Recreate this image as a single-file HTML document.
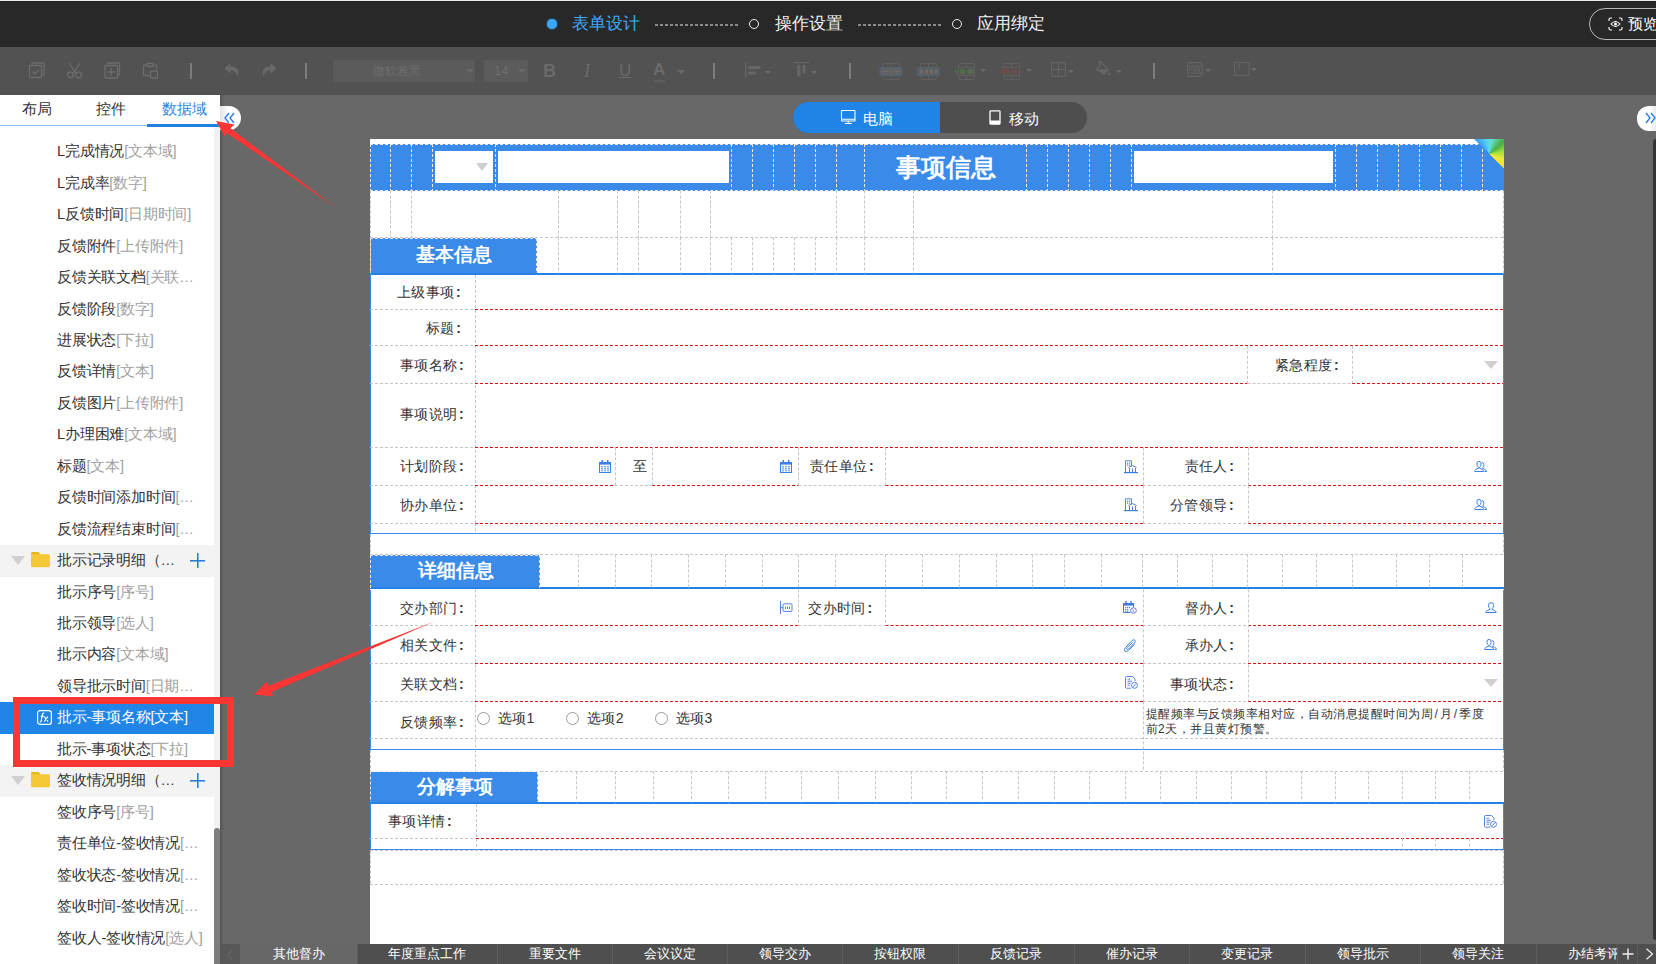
<!DOCTYPE html>
<html><head><meta charset="utf-8">
<style>
*{box-sizing:border-box;margin:0;padding:0}
body{width:1656px;height:964px;overflow:hidden;position:relative;background:#686868;font-family:"Liberation Sans",sans-serif;font-size:14px;color:#333}
.a{position:absolute}
#top{left:0;top:0;width:1656px;height:47px;background:#282828}
#topline{left:0;top:0;width:1656px;height:1px;background:#eeeff1;z-index:5}
#tool{left:0;top:47px;width:1656px;height:48px;background:#525252}
#side{left:0;top:95px;width:220px;height:869px;background:#fff;overflow:hidden}
#page{left:370px;top:139px;width:1134px;height:805px;background:#fff}
#btm{left:220px;top:944px;width:1436px;height:20px;background:#4f4f4f;overflow:hidden}
.bt{top:0;height:20px;font-size:13px;line-height:20px;color:#fff;white-space:nowrap;overflow:hidden}
.stept{font-size:17px;line-height:20px;top:14px;white-space:nowrap}
.dots{top:24px;height:2px;background-image:linear-gradient(to right,#8a8a8a 60%,transparent 60%);background-size:5px 2px}
.ring{width:10px;height:10px;border:1.4px solid #eee;border-radius:50%;top:19px}
.ic{stroke:#6c6c6c;fill:none;stroke-width:1.3}
.sep{width:2px;height:16px;top:16px;background:#7c7c7c}
.caret{width:0;height:0;border-left:4px solid transparent;border-right:4px solid transparent;border-top:4px solid #6a6a6a}
.tab{top:4.5px;font-size:14.6px;line-height:18px;color:#333;white-space:nowrap}
.row{left:0;width:214px;height:31.9px}
.row .t{top:6.15px;font-size:14.6px;letter-spacing:-0.2px;line-height:18px;color:#333;white-space:nowrap}
.row i{font-style:normal;color:#a0a0a0}
.fold{background:#f3f3f3}
.sel{background:#2185e8}
.tri{left:11px;top:10.8px;width:0;height:0;border-left:7px solid transparent;border-right:7px solid transparent;border-top:9px solid #d0d0d0}
.plus{left:190px;top:8px;width:15px;height:15px;background:linear-gradient(#2a7ee0,#2a7ee0) center/15px 1.6px no-repeat,linear-gradient(#2a7ee0,#2a7ee0) center/1.6px 15px no-repeat}
.lb{font-size:14px;letter-spacing:0.4px;line-height:18px;color:#333;white-space:nowrap}
.ttl{font-size:25px;font-weight:bold;line-height:30px;color:#fff;white-space:nowrap}
.sec{font-size:19px;font-weight:bold;line-height:24px;color:#fff;white-space:nowrap}
.hint{font-size:12px;letter-spacing:0.5px;line-height:15.8px;color:#333;white-space:nowrap}
.co{font-weight:bold;margin-left:1.5px}
.sl{font-style:normal;margin:0 1.5px}
</style></head><body>
<div id="topline" class="a"></div>
<div class="a" style="left:0;top:1px;width:1656px;height:1px;background:#1e1e1e;z-index:5"></div>
<div id="top" class="a">
  <div class="a" style="left:547px;top:19px;width:10px;height:10px;border-radius:50%;background:#3aa7f7;box-shadow:0 0 2px #3aa7f7"></div>
  <div class="a stept" style="left:572px;color:#40a8f8">表单设计</div>
  <div class="a dots" style="left:655px;width:84px"></div>
  <div class="a ring" style="left:749px"></div>
  <div class="a stept" style="left:775px;color:#f2f2f2">操作设置</div>
  <div class="a dots" style="left:858px;width:84px"></div>
  <div class="a ring" style="left:952px"></div>
  <div class="a stept" style="left:977px;color:#f2f2f2">应用绑定</div>
  <div class="a" style="left:1589px;top:8px;width:120px;height:32px;border:1.3px solid #b8b8b8;border-radius:16px"></div>
  <svg class="a" style="left:1607.5px;top:16.5px" width="15" height="14" viewBox="0 0 15 14"><g stroke="#fff" fill="none" stroke-width="1.1"><path d="M1 4V2.5Q1 1 2.5 1H4M11 1h1.5Q14 1 14 2.5V4M14 10v1.5Q14 13 12.5 13H11M4 13H2.5Q1 13 1 11.5V10"/><path d="M3 7Q7.5 2 12 7Q7.5 12 3 7z"/></g><circle cx="7.5" cy="7" r="1.5" fill="#fff"/></svg>
  <div class="a" style="left:1627.5px;top:13.5px;font-size:15px;line-height:20px;color:#fff;white-space:nowrap">预览</div>
</div>
<div id="tool" class="a">
  <svg class="a" style="left:28px;top:15px" width="18" height="17" viewBox="0 0 18 17"><g class="ic"><path d="M4 2.5V1.5Q4 1 4.5 1H15.5Q16 1 16 1.5V12.5Q16 13 15.5 13H14"/><rect x="1.5" y="3.5" width="12" height="12" rx="0.8"/><path d="M4.5 9.5l2.5 2.5 4-4.5"/></g></svg>
  <svg class="a" style="left:66px;top:15px" width="17" height="17" viewBox="0 0 17 17"><g class="ic"><path d="M3 1l6.5 10M14 1L7.5 11"/><circle cx="4.5" cy="13" r="2.8"/><circle cx="12.5" cy="13" r="2.8"/></g></svg>
  <svg class="a" style="left:104px;top:15px" width="17" height="17" viewBox="0 0 17 17"><g class="ic"><path d="M3.5 2.5V1.5Q3.5 1 4 1H15Q15.5 1 15.5 1.5V12.5Q15.5 13 15 13H14"/><rect x="1" y="3.5" width="12.5" height="12.5" rx="0.8"/><path d="M7.2 6v8M3.3 10h7.8"/></g></svg>
  <svg class="a" style="left:142px;top:15px" width="17" height="17" viewBox="0 0 17 17"><g class="ic"><path d="M4 3H2.5Q1.5 3 1.5 4V12.5Q1.5 13.5 2.5 13.5H8M12.5 3H14Q14.5 3 14.5 4V7"/><rect x="5" y="1.5" width="6" height="3" rx="0.5"/><rect x="8.5" y="9" width="7" height="7" rx="1"/><path d="M13.5 14h0.5"/></g></svg>
  <div class="a sep" style="left:190px"></div>
  <svg class="a" style="left:224px;top:15px" width="16" height="16" viewBox="0 0 16 16"><path fill="#696969" d="M6.5 1L0.5 6.5 6.5 11.5V8.5Q12 8 13.5 14.5 15 10 14 8.5 12 4.8 6.5 4.6z"/></svg>
  <svg class="a" style="left:261px;top:15px" width="16" height="16" viewBox="0 0 16 16"><path fill="#696969" d="M9.5 1L15.5 6.5 9.5 11.5V8.5Q4 8 2.5 14.5 1 10 2 8.5 4 4.8 9.5 4.6z"/></svg>
  <div class="a sep" style="left:305px"></div>
  <div class="a" style="left:333px;top:13px;width:142px;height:22px;background:#5b5b5b;border-radius:2px"></div>
  <div class="a" style="left:373px;top:15px;font-size:12px;line-height:18px;color:#6e6e6e">微软雅黑</div>
  <div class="a caret" style="left:466px;top:22px"></div>
  <div class="a" style="left:484px;top:13px;width:44px;height:22px;background:#5b5b5b;border-radius:2px"></div>
  <div class="a" style="left:494px;top:15px;font-size:13px;line-height:18px;color:#6e6e6e">14</div>
  <div class="a caret" style="left:518px;top:22px"></div>
  <div class="a" style="left:543px;top:13px;font-size:18px;font-weight:bold;line-height:22px;color:#6a6a6a">B</div>
  <div class="a" style="left:584px;top:13px;font-size:18px;font-style:italic;font-family:'Liberation Serif',serif;line-height:22px;color:#6a6a6a">I</div>
  <div class="a" style="left:619px;top:13px;font-size:17px;line-height:22px;color:#6a6a6a;text-decoration:underline">U</div>
  <div class="a" style="left:653px;top:13px;font-size:17px;font-weight:bold;line-height:20px;color:#6a6a6a;border-bottom:2px solid #5d5d5d">A</div>
  <div class="a caret" style="left:677px;top:23px"></div>
  <div class="a sep" style="left:713px"></div>
  <svg class="a" style="left:745px;top:15px" width="18" height="16" viewBox="0 0 18 16"><g fill="#666"><rect x="0" y="0" width="1.3" height="16"/><rect x="3" y="4" width="12.5" height="3.2" rx="1.6"/><rect x="3" y="9.5" width="8.5" height="3.2" rx="1.6"/></g></svg>
  <div class="a caret" style="left:765px;top:24px;border-width:3.5px 3.5px 0"></div>
  <svg class="a" style="left:793px;top:15px" width="16" height="16" viewBox="0 0 16 16"><g fill="#666"><rect x="0" y="0" width="16" height="1.2"/><rect x="4" y="2.8" width="3.5" height="12" rx="1.7"/><rect x="9.5" y="2.8" width="3.2" height="8.5" rx="1.6"/></g></svg>
  <div class="a caret" style="left:811px;top:24px;border-width:3.5px 3.5px 0"></div>
  <div class="a sep" style="left:849px"></div>
  <svg class="a" style="left:879px;top:16px" width="24" height="17" viewBox="0 0 24 17"><g fill="none" stroke="#606060" stroke-width="1"><rect x="4" y="0.5" width="16" height="16" rx="1.5"/><path d="M12 0.5v4M12 12.5v4"/></g><rect x="1" y="4.5" width="22" height="8" rx="1" fill="#626262" stroke="#50627a" stroke-width="1.2"/><path d="M4 8.5h5M20 8.5h-5" stroke="#6e6e6e" stroke-width="1.2"/></svg>
  <svg class="a" style="left:917px;top:16px" width="23" height="17" viewBox="0 0 23 17"><g fill="none" stroke="#606060" stroke-width="1"><rect x="3.5" y="0.5" width="16" height="16" rx="1.5"/><path d="M11.5 0.5v4M11.5 12.5v4"/></g><rect x="0.8" y="4.5" width="21.5" height="8" rx="1" fill="#5e5e5e" stroke="#50627a" stroke-width="1.2"/><g fill="#6c6c6c"><rect x="3" y="6.5" width="3" height="4"/><rect x="8" y="6.5" width="3" height="4"/><rect x="13" y="6.5" width="3" height="4"/><rect x="18" y="6.5" width="3" height="4"/></g></svg>
  <svg class="a" style="left:954px;top:16px" width="26" height="17" viewBox="0 0 26 17"><g fill="none" stroke="#606060" stroke-width="1"><rect x="4.5" y="0.5" width="16" height="16" rx="1.5"/><path d="M4.5 4.5h16M4.5 12.5h16M12.5 0.5v4M12.5 12.5v4"/></g><g fill="#566a4e"><path d="M0.5 8.5l3-2.5v5z"/><rect x="5.5" y="5.8" width="6" height="5.4" rx="2.5"/><rect x="13" y="5.8" width="7" height="5.4" rx="2.5"/></g></svg>
  <div class="a caret" style="left:980px;top:22px;border-width:3.5px 3.5px 0"></div>
  <svg class="a" style="left:1000px;top:16px" width="26" height="17" viewBox="0 0 26 17"><g fill="none" stroke="#606060" stroke-width="1"><rect x="3.5" y="0.5" width="16" height="16" rx="1.5"/><path d="M3.5 4.5h16M3.5 12.5h16M11.5 0.5v4M11.5 12.5v4"/></g><g fill="#6a4e4e"><rect x="0.5" y="5.8" width="9" height="5.4" rx="2.5"/><rect x="10.5" y="5.8" width="7" height="5.4" rx="2.5"/></g><path d="M20.5 6.5l3 4M23.5 6.5l-3 4" stroke="#6a4e4e" stroke-width="1.1"/></svg>
  <div class="a caret" style="left:1026px;top:22px;border-width:3.5px 3.5px 0"></div>
  <svg class="a" style="left:1051px;top:15px" width="15" height="15" viewBox="0 0 15 15"><g fill="none" stroke="#656565" stroke-width="1.1"><rect x="0.6" y="0.6" width="13.8" height="13.8" rx="1.2"/><path d="M7.5 0.6v13.8M0.6 7.5h13.8"/></g></svg>
  <div class="a caret" style="left:1068px;top:23px;border-width:3.5px 3.5px 0"></div>
  <svg class="a" style="left:1095px;top:14px" width="16" height="16" viewBox="0 0 16 16"><g fill="#666"><path d="M4 1l1-0.8 8.5 8.3L9 13.5 1.5 8 5.2 4.5z" fill="none" stroke="#666" stroke-width="1.2"/><path d="M2 8.3h11L9 13z"/><circle cx="14" cy="13" r="1.3"/></g></svg>
  <div class="a caret" style="left:1116px;top:23px;border-width:3.5px 3.5px 0"></div>
  <div class="a sep" style="left:1153px"></div>
  <svg class="a" style="left:1187px;top:15px" width="16" height="15" viewBox="0 0 16 15"><g fill="none" stroke="#656565" stroke-width="1.1"><rect x="0.6" y="0.6" width="14.5" height="13.8" rx="1.8"/><path d="M0.6 4h14.5M0.6 11h14.5M3 6v3M3 6h3M7 6h5v3H7z"/></g></svg>
  <div class="a caret" style="left:1205px;top:22px;border-width:3.5px 3.5px 0"></div>
  <svg class="a" style="left:1234px;top:15px" width="16" height="14" viewBox="0 0 16 14"><g fill="none" stroke="#656565" stroke-width="1.1"><rect x="0.6" y="0.6" width="14.5" height="12.8"/><path d="M3.5 3h3M5 3v5"/></g></svg>
  <div class="a caret" style="left:1251px;top:21px;border-width:3.5px 3.5px 0"></div>
</div>
<div id="side" class="a">
  <div class="a tab" style="left:22px">布局</div>
  <div class="a tab" style="left:96px">控件</div>
  <div class="a tab" style="left:162px;color:#2e86e6">数据域</div>
  <div class="a" style="left:0;top:30px;width:220px;height:1px;background:#8fc0f0"></div>
  <div class="a" style="left:147px;top:29px;width:73px;height:3px;background:#1f80e0"></div>
  <div class="a" style="left:214px;top:32px;width:6px;height:837px;background:#f2f2f2"></div>
  <div class="a" style="left:214px;top:733px;width:6px;height:136px;background:#7c7c7c;border-radius:3px 3px 0 0"></div>
<div class="a row" style="top:41.15px"><span class="a t" style="left:57px">L完成情况<i>[文本域]</i></span></div>
<div class="a row" style="top:72.60px"><span class="a t" style="left:57px">L完成率<i>[数字]</i></span></div>
<div class="a row" style="top:104.05px"><span class="a t" style="left:57px">L反馈时间<i>[日期时间]</i></span></div>
<div class="a row" style="top:135.50px"><span class="a t" style="left:57px">反馈附件<i>[上传附件]</i></span></div>
<div class="a row" style="top:166.95px"><span class="a t" style="left:57px">反馈关联文档<i>[关联…</i></span></div>
<div class="a row" style="top:198.40px"><span class="a t" style="left:57px">反馈阶段<i>[数字]</i></span></div>
<div class="a row" style="top:229.85px"><span class="a t" style="left:57px">进展状态<i>[下拉]</i></span></div>
<div class="a row" style="top:261.30px"><span class="a t" style="left:57px">反馈详情<i>[文本]</i></span></div>
<div class="a row" style="top:292.75px"><span class="a t" style="left:57px">反馈图片<i>[上传附件]</i></span></div>
<div class="a row" style="top:324.20px"><span class="a t" style="left:57px">L办理困难<i>[文本域]</i></span></div>
<div class="a row" style="top:355.65px"><span class="a t" style="left:57px">标题<i>[文本]</i></span></div>
<div class="a row" style="top:387.10px"><span class="a t" style="left:57px">反馈时间添加时间<i>[…</i></span></div>
<div class="a row" style="top:418.55px"><span class="a t" style="left:57px">反馈流程结束时间<i>[…</i></span></div>
<div class="a row fold" style="top:450.00px"><div class="a tri"></div><svg class="a" style="left:31px;top:7px" width="19" height="16" viewBox="0 0 19 16"><path d="M0 1.5Q0 0 1.5 0H7.5L9.5 2.2H17.5Q19 2.2 19 3.7V13.7Q19 15.2 17.5 15.2H1.5Q0 15.2 0 13.7z" fill="#f5c935"/><path d="M0 1.5Q0 0 1.5 0H7.5L9.3 2.2H0z" fill="#e7b81c"/></svg><span class="a t" style="left:57px">批示记录明细（…</span><div class="a plus"></div></div>
<div class="a row" style="top:481.45px"><span class="a t" style="left:57px">批示序号<i>[序号]</i></span></div>
<div class="a row" style="top:512.90px"><span class="a t" style="left:57px">批示领导<i>[选人]</i></span></div>
<div class="a row" style="top:544.35px"><span class="a t" style="left:57px">批示内容<i>[文本域]</i></span></div>
<div class="a row" style="top:575.80px"><span class="a t" style="left:57px">领导批示时间<i>[日期…</i></span></div>
<div class="a row sel" style="top:607.25px"><svg class="a" style="left:37px;top:8px" width="15" height="15" viewBox="0 0 15 15"><g fill="none" stroke="#fff" stroke-width="1.2"><rect x="0.6" y="0.6" width="13.8" height="13.8" rx="2.5"/><path d="M7.2 3.3Q5.8 2.8 5.4 4.3L4.2 10.8Q3.9 12 2.8 11.8M3.8 6.3h3M7.3 6.5l3.6 5M10.9 6.5l-3.6 5"/></g></svg><span class="a t" style="left:57px;color:#fff">批示-事项名称[文本]</span></div>
<div class="a row" style="top:638.70px"><span class="a t" style="left:57px">批示-事项状态<i>[下拉]</i></span></div>
<div class="a row fold" style="top:670.15px"><div class="a tri"></div><svg class="a" style="left:31px;top:7px" width="19" height="16" viewBox="0 0 19 16"><path d="M0 1.5Q0 0 1.5 0H7.5L9.5 2.2H17.5Q19 2.2 19 3.7V13.7Q19 15.2 17.5 15.2H1.5Q0 15.2 0 13.7z" fill="#f5c935"/><path d="M0 1.5Q0 0 1.5 0H7.5L9.3 2.2H0z" fill="#e7b81c"/></svg><span class="a t" style="left:57px">签收情况明细（…</span><div class="a plus"></div></div>
<div class="a row" style="top:701.60px"><span class="a t" style="left:57px">签收序号<i>[序号]</i></span></div>
<div class="a row" style="top:733.05px"><span class="a t" style="left:57px">责任单位-签收情况<i>[…</i></span></div>
<div class="a row" style="top:764.50px"><span class="a t" style="left:57px">签收状态-签收情况<i>[…</i></span></div>
<div class="a row" style="top:795.95px"><span class="a t" style="left:57px">签收时间-签收情况<i>[…</i></span></div>
<div class="a row" style="top:827.40px"><span class="a t" style="left:57px">签收人-签收情况<i>[选人]</i></span></div>
</div>
<div class="a" style="left:220px;top:95px;width:4px;height:869px;background:linear-gradient(to right,rgba(0,0,0,0.2),rgba(0,0,0,0))"></div>
<!--CANVAS-->
<div class="a" style="left:220px;top:106px;width:21px;height:24px;background:linear-gradient(to right,#e4e4e4,#fff 40%);border-radius:0 12px 12px 0"></div>
<svg class="a" style="left:224px;top:112px" width="12" height="12" viewBox="0 0 12 12"><path d="M5 1L1 6l4 5M10 1L6 6l4 5" fill="none" stroke="#2a7ee8" stroke-width="1.4"/></svg>
<div class="a" style="left:1637px;top:106px;width:21px;height:25px;background:linear-gradient(to left,#e4e4e4,#fff 40%);border-radius:12px 0 0 12px"></div>
<svg class="a" style="left:1645px;top:112px" width="12" height="12" viewBox="0 0 12 12"><path d="M1 1l4 5-4 5M6 1l4 5-4 5" fill="none" stroke="#2a7ee8" stroke-width="1.4"/></svg>
<div class="a" style="left:793px;top:102px;width:294px;height:31px;border-radius:15.5px;background:#4e4e4e;overflow:hidden"><div class="a" style="left:0;top:0;width:147px;height:31px;background:#2083e6"></div></div>
<svg class="a" style="left:840px;top:109px" width="16" height="16" viewBox="0 0 16 16"><g fill="none" stroke="#fff" stroke-width="1.1"><rect x="1.5" y="1.5" width="13.5" height="10.5" rx="0.6"/><path d="M1.5 10.3h13.5M8.2 12v2.5M4.8 14.5h7"/></g></svg>
<div class="a" style="left:863px;top:109.5px;font-size:15px;line-height:18px;color:#fff">电脑</div>
<svg class="a" style="left:989px;top:110px" width="12" height="15" viewBox="0 0 12 15"><g fill="none" stroke="#fff" stroke-width="1.3"><rect x="1" y="0.8" width="10" height="13.4" rx="0.8"/></g><rect x="1" y="10.5" width="10" height="3.5" fill="#fff"/></svg>
<div class="a" style="left:1009px;top:109.5px;font-size:15px;line-height:18px;color:#fff">移动</div>

<div class="a" style="left:1653px;top:139px;width:6px;height:801px;background:#343434;border-radius:3px"></div>

<!--/CANVAS-->
<!--FORM-->
<div id="page" class="a">
<div class="a" style="left:0.0px;top:5.0px;width:1134.0px;height:46.5px;background:#3a8be9;"></div>
<div class="a" style="left:65.0px;top:12.0px;width:58.0px;height:32.0px;background:#fff;"></div>
<div class="a" style="left:106px;top:24px;width:0;height:0;border-left:6.5px solid transparent;border-right:6.5px solid transparent;border-top:8px solid #cfcfcf"></div>
<div class="a" style="left:127.8px;top:12.0px;width:231.2px;height:32.0px;background:#fff;"></div>
<div class="a" style="left:763.7px;top:12.0px;width:199.6px;height:32.0px;background:#fff;"></div>
<div class="a ttl" style="left:526.0px;top:13.0px;">事项信息</div>
<div class="a" style="left:0.0px;top:99.0px;width:167.0px;height:36.0px;background:#3a8be9;"></div>
<div class="a sec" style="left:46.0px;top:103.5px;">基本信息</div>
<div class="a" style="left:0.0px;top:134.0px;width:1134.0px;height:2.0px;background:#2580e8;"></div>
<div class="a" style="left:0.0px;top:136.0px;width:1.0px;height:258.5px;background:#3a8be9;"></div>
<div class="a" style="left:1133.0px;top:136.0px;width:1.0px;height:258.5px;background:#3a8be9;"></div>
<div class="a" style="left:0.0px;top:394.0px;width:1134.0px;height:1.0px;background:#3a8be9;"></div>
<div class="a lb" style="left:26.9px;top:144.3px;">上级事项<b class=co>:</b></div>
<div class="a lb" style="left:56.0px;top:179.8px;">标题<b class=co>:</b></div>
<div class="a lb" style="left:30.0px;top:216.8px;">事项名称<b class=co>:</b></div>
<div class="a lb" style="left:30.0px;top:266.3px;">事项说明<b class=co>:</b></div>
<div class="a lb" style="left:30.0px;top:318.3px;">计划阶段<b class=co>:</b></div>
<div class="a lb" style="left:30.0px;top:356.8px;">协办单位<b class=co>:</b></div>
<div class="a lb" style="left:905.0px;top:216.8px;">紧急程度<b class=co>:</b></div>
<div class="a lb" style="left:262.9px;top:318.3px;">至</div>
<div class="a lb" style="left:440.0px;top:318.3px;">责任单位<b class=co>:</b></div>
<div class="a lb" style="left:814.5px;top:318.3px;">责任人<b class=co>:</b></div>
<div class="a lb" style="left:800.0px;top:356.8px;">分管领导<b class=co>:</b></div>
<div class="a" style="left:0.0px;top:416.0px;width:170.0px;height:33.5px;background:#3a8be9;"></div>
<div class="a sec" style="left:47.5px;top:420.0px;">详细信息</div>
<div class="a" style="left:0.0px;top:448.0px;width:1134.0px;height:2.0px;background:#2580e8;"></div>
<div class="a" style="left:0.0px;top:450.5px;width:1.0px;height:159.8px;background:#3a8be9;"></div>
<div class="a" style="left:1133.0px;top:450.5px;width:1.0px;height:159.8px;background:#3a8be9;"></div>
<div class="a" style="left:0.0px;top:610.0px;width:1134.0px;height:1.0px;background:#3a8be9;"></div>
<div class="a lb" style="left:30.0px;top:459.8px;">交办部门<b class=co>:</b></div>
<div class="a lb" style="left:30.0px;top:496.8px;">相关文件<b class=co>:</b></div>
<div class="a lb" style="left:30.0px;top:536.3px;">关联文档<b class=co>:</b></div>
<div class="a lb" style="left:30.0px;top:574.3px;">反馈频率<b class=co>:</b></div>
<div class="a lb" style="left:438.3px;top:459.8px;">交办时间<b class=co>:</b></div>
<div class="a lb" style="left:814.5px;top:459.8px;">督办人<b class=co>:</b></div>
<div class="a lb" style="left:814.5px;top:496.8px;">承办人<b class=co>:</b></div>
<div class="a lb" style="left:800.0px;top:536.3px;">事项状态<b class=co>:</b></div>
<div class="a" style="left:107px;top:573.2px;width:13px;height:13px;border:1px solid #9a9a9a;border-radius:50%"></div>
<div class="a lb" style="left:127.8px;top:570.3px;font-size:14px">选项1</div>
<div class="a" style="left:196px;top:573.2px;width:13px;height:13px;border:1px solid #9a9a9a;border-radius:50%"></div>
<div class="a lb" style="left:217.0px;top:570.3px;font-size:14px">选项2</div>
<div class="a" style="left:285px;top:573.2px;width:13px;height:13px;border:1px solid #9a9a9a;border-radius:50%"></div>
<div class="a lb" style="left:305.6px;top:570.3px;font-size:14px">选项3</div>
<div class="a hint" style="left:775.5px;top:567.5px;">提醒频率与反馈频率相对应，自动消息提醒时间为周<i class=sl>/</i>月<i class=sl>/</i>季度<br>前2天，并且黄灯预警。</div>
<div class="a" style="left:0.0px;top:632.5px;width:167.5px;height:31.5px;background:#3a8be9;"></div>
<div class="a sec" style="left:46.5px;top:636.0px;">分解事项</div>
<div class="a" style="left:0.0px;top:663.0px;width:1134.0px;height:2.0px;background:#2580e8;"></div>
<div class="a" style="left:0.0px;top:665.0px;width:1.0px;height:46.0px;background:#3a8be9;"></div>
<div class="a" style="left:1133.0px;top:665.0px;width:1.0px;height:46.0px;background:#3a8be9;"></div>
<div class="a" style="left:0.0px;top:710.0px;width:1134.0px;height:1.0px;background:#3a8be9;"></div>
<div class="a lb" style="left:18.0px;top:672.8px;">事项详情<b class=co>:</b></div>
<svg class="a" style="left:228.5px;top:321.0px" width="12" height="13" viewBox="0 0 12 13"><g fill="none" stroke="#3a7fe8" stroke-width="1"><rect x="0.5" y="2.5" width="11" height="10" /></g><rect x="0" y="2" width="12" height="2.6" fill="#3a7fe8"/><rect x="2.5" y="0" width="1.5" height="3" fill="#3a7fe8"/><rect x="8" y="0" width="1.5" height="3" fill="#3a7fe8"/><g fill="#3a7fe8"><rect x="2.3" y="6" width="1.4" height="1.4"/><rect x="5.3" y="6" width="1.4" height="1.4"/><rect x="8.3" y="6" width="1.4" height="1.4"/><rect x="2.3" y="8.2" width="1.4" height="1.4"/><rect x="5.3" y="8.2" width="1.4" height="1.4"/><rect x="8.3" y="8.2" width="1.4" height="1.4"/><rect x="2.3" y="10.2" width="1.4" height="1.2"/><rect x="5.3" y="10.2" width="1.4" height="1.2"/><rect x="8.3" y="10.2" width="1.4" height="1.2"/></g></svg>
<svg class="a" style="left:410.0px;top:321.0px" width="12" height="13" viewBox="0 0 12 13"><g fill="none" stroke="#3a7fe8" stroke-width="1"><rect x="0.5" y="2.5" width="11" height="10" /></g><rect x="0" y="2" width="12" height="2.6" fill="#3a7fe8"/><rect x="2.5" y="0" width="1.5" height="3" fill="#3a7fe8"/><rect x="8" y="0" width="1.5" height="3" fill="#3a7fe8"/><g fill="#3a7fe8"><rect x="2.3" y="6" width="1.4" height="1.4"/><rect x="5.3" y="6" width="1.4" height="1.4"/><rect x="8.3" y="6" width="1.4" height="1.4"/><rect x="2.3" y="8.2" width="1.4" height="1.4"/><rect x="5.3" y="8.2" width="1.4" height="1.4"/><rect x="8.3" y="8.2" width="1.4" height="1.4"/><rect x="2.3" y="10.2" width="1.4" height="1.2"/><rect x="5.3" y="10.2" width="1.4" height="1.2"/><rect x="8.3" y="10.2" width="1.4" height="1.2"/></g></svg>
<svg class="a" style="left:754.0px;top:321.0px" width="14" height="14" viewBox="0 0 14 14"><g fill="none" stroke="#5a7ee6" stroke-width="1"><path d="M1.5 12.5V0.8H7.5V6.5"/><path d="M4.5 7.5L8.5 5.5 12.5 7.5M5.5 8v4.5M11.5 8v4.5M8.5 8.5v4"/></g><rect x="0" y="12" width="14" height="1.2" fill="#3a7fe8"/><g fill="#6a6ae0"><rect x="3" y="2.5" width="1.2" height="1.2"/><rect x="5" y="2.5" width="1.2" height="1.2"/><rect x="3" y="4.5" width="1.2" height="1.2"/><rect x="5" y="4.5" width="1.2" height="1.2"/></g></svg>
<svg class="a" style="left:754.0px;top:359.0px" width="14" height="14" viewBox="0 0 14 14"><g fill="none" stroke="#5a7ee6" stroke-width="1"><path d="M1.5 12.5V0.8H7.5V6.5"/><path d="M4.5 7.5L8.5 5.5 12.5 7.5M5.5 8v4.5M11.5 8v4.5M8.5 8.5v4"/></g><rect x="0" y="12" width="14" height="1.2" fill="#3a7fe8"/><g fill="#6a6ae0"><rect x="3" y="2.5" width="1.2" height="1.2"/><rect x="5" y="2.5" width="1.2" height="1.2"/><rect x="3" y="4.5" width="1.2" height="1.2"/><rect x="5" y="4.5" width="1.2" height="1.2"/></g></svg>
<svg class="a" style="left:1103.5px;top:322.0px" width="13" height="11" viewBox="0 0 13 11"><g fill="none" stroke="#3a7fe8" stroke-width="1"><path d="M0.8 10.5V9.5Q1.5 8 4.5 7.2V6.2Q3 5.5 3 3.5V2Q3 0.5 5 0.5Q7 0.5 7 2V3.5Q7 5.5 5.5 6.2V7.2Q8.5 8 9.5 9.5V10.5z"/><path d="M8 1.5Q9.8 1.8 9.8 3.5V4.8Q9.8 6 8.8 6.8V7.5Q11 8.2 12.5 9.8V10.5H10.5"/></g></svg>
<svg class="a" style="left:1103.5px;top:360.0px" width="13" height="11" viewBox="0 0 13 11"><g fill="none" stroke="#3a7fe8" stroke-width="1"><path d="M0.8 10.5V9.5Q1.5 8 4.5 7.2V6.2Q3 5.5 3 3.5V2Q3 0.5 5 0.5Q7 0.5 7 2V3.5Q7 5.5 5.5 6.2V7.2Q8.5 8 9.5 9.5V10.5z"/><path d="M8 1.5Q9.8 1.8 9.8 3.5V4.8Q9.8 6 8.8 6.8V7.5Q11 8.2 12.5 9.8V10.5H10.5"/></g></svg>
<svg class="a" style="left:409.5px;top:462.0px" width="13" height="13" viewBox="0 0 13 13"><g fill="none" stroke="#5a7ee6" stroke-width="1"><path d="M0.5 0v13M0.8 6.6h2"/><rect x="3" y="2.8" width="9" height="7.6" rx="1"/><path d="M5.5 5.5v2.5M7.5 5.5v2.5M9.5 5.5v2.5"/></g></svg>
<svg class="a" style="left:753.0px;top:462.0px" width="14" height="13" viewBox="0 0 14 13"><g fill="none" stroke="#3a7fe8" stroke-width="1"><path d="M7.5 11.5H0.5V2.5H10.5V6"/></g><rect x="0" y="2" width="11" height="2.6" fill="#3a7fe8"/><rect x="2.3" y="0" width="1.4" height="3" fill="#3a7fe8"/><rect x="7.3" y="0" width="1.4" height="3" fill="#3a7fe8"/><g fill="#4a9af0"><rect x="2" y="5.8" width="1.3" height="1.3"/><rect x="4" y="5.8" width="1.3" height="1.3"/><rect x="6" y="5.8" width="1.3" height="1.3"/><rect x="2" y="7.8" width="1.3" height="1.3"/><rect x="4" y="7.8" width="1.3" height="1.3"/><rect x="2" y="9.6" width="1.3" height="1.3"/><rect x="4" y="9.6" width="1.3" height="1.3"/></g><circle cx="10.5" cy="9.5" r="2.8" fill="#fff" stroke="#6a70e0" stroke-width="1"/><path d="M10 8v1.8l1.3 1.2" fill="none" stroke="#6a70e0" stroke-width="0.8"/></svg>
<svg class="a" style="left:1114.5px;top:463.0px" width="12" height="11" viewBox="0 0 12 11"><g fill="none" stroke="#3a7fe8" stroke-width="1"><path d="M0.8 10.5V10Q1.5 8.3 5 7.5V6.6Q3.5 5.8 3.5 3.8V2.3Q3.5 0.8 6 0.8Q8.5 0.8 8.5 2.3V3.8Q8.5 5.8 7 6.6V7.5Q10.5 8.3 11.2 10V10.5z"/></g></svg>
<svg class="a" style="left:754.0px;top:500.0px" width="12" height="13" viewBox="0 0 12 13"><path d="M10.5 5.5L4.5 11.5Q2 13.5 0.8 12Q-0.5 10.5 1.5 8.5L7.8 1.8Q9.5 0 10.8 1.2Q12 2.5 10.5 4L4.5 10Q3.5 11 2.8 10.3Q2.2 9.6 3.2 8.6L8.5 3.5" fill="none" stroke="#3a7fe8" stroke-width="1"/></svg>
<svg class="a" style="left:1114.0px;top:500.0px" width="13" height="11" viewBox="0 0 13 11"><g fill="none" stroke="#3a7fe8" stroke-width="1"><path d="M0.8 10.5V9.5Q1.5 8 4.5 7.2V6.2Q3 5.5 3 3.5V2Q3 0.5 5 0.5Q7 0.5 7 2V3.5Q7 5.5 5.5 6.2V7.2Q8.5 8 9.5 9.5V10.5z"/><path d="M8 1.5Q9.8 1.8 9.8 3.5V4.8Q9.8 6 8.8 6.8V7.5Q11 8.2 12.5 9.8V10.5H10.5"/></g></svg>
<svg class="a" style="left:755.0px;top:537.0px" width="13" height="13" viewBox="0 0 13 13"><g fill="none" stroke="#5a80e8" stroke-width="1"><path d="M6 12.2H1.5Q0.5 12.2 0.5 11.2V1.5Q0.5 0.5 1.5 0.5H7.5L10 3V5"/><path d="M2.5 3.2h2.5M2.5 5.2h4.5M2.5 7.2h3M2.5 9.2h2.5"/><circle cx="9.5" cy="9.3" r="3"/><path d="M8 11l3-3.5"/></g></svg>
<svg class="a" style="left:1114.0px;top:676.0px" width="13" height="13" viewBox="0 0 13 13"><g fill="none" stroke="#5a80e8" stroke-width="1"><path d="M6 12.2H1.5Q0.5 12.2 0.5 11.2V1.5Q0.5 0.5 1.5 0.5H7.5L10 3V5"/><path d="M2.5 3.2h2.5M2.5 5.2h4.5M2.5 7.2h3M2.5 9.2h2.5"/><circle cx="9.5" cy="9.3" r="3"/><path d="M8 11l3-3.5"/></g></svg>
<div class="a" style="left:1114px;top:222px;width:0;height:0;border-left:7px solid transparent;border-right:7px solid transparent;border-top:8px solid #cfcfcf"></div>
<div class="a" style="left:1114px;top:539.5px;width:0;height:0;border-left:7px solid transparent;border-right:7px solid transparent;border-top:8px solid #cfcfcf"></div>
<svg class="a" style="left:0;top:0" width="1134" height="805" viewBox="0 0 1134 805">
<line x1="20.5" y1="5.0" x2="20.5" y2="51.5" stroke="#f0e6d8" stroke-width="1" stroke-dasharray="3 2"/>
<line x1="41.5" y1="5.0" x2="41.5" y2="51.5" stroke="#f0e6d8" stroke-width="1" stroke-dasharray="3 2"/>
<line x1="62.5" y1="5.0" x2="62.5" y2="51.5" stroke="#f0e6d8" stroke-width="1" stroke-dasharray="3 2"/>
<line x1="125.5" y1="5.0" x2="125.5" y2="51.5" stroke="#f0e6d8" stroke-width="1" stroke-dasharray="3 2"/>
<line x1="361.5" y1="5.0" x2="361.5" y2="51.5" stroke="#f0e6d8" stroke-width="1" stroke-dasharray="3 2"/>
<line x1="382.5" y1="5.0" x2="382.5" y2="51.5" stroke="#f0e6d8" stroke-width="1" stroke-dasharray="3 2"/>
<line x1="403.5" y1="5.0" x2="403.5" y2="51.5" stroke="#f0e6d8" stroke-width="1" stroke-dasharray="3 2"/>
<line x1="424.5" y1="5.0" x2="424.5" y2="51.5" stroke="#f0e6d8" stroke-width="1" stroke-dasharray="3 2"/>
<line x1="445.5" y1="5.0" x2="445.5" y2="51.5" stroke="#f0e6d8" stroke-width="1" stroke-dasharray="3 2"/>
<line x1="466.5" y1="5.0" x2="466.5" y2="51.5" stroke="#f0e6d8" stroke-width="1" stroke-dasharray="3 2"/>
<line x1="494.5" y1="5.0" x2="494.5" y2="51.5" stroke="#f0e6d8" stroke-width="1" stroke-dasharray="3 2"/>
<line x1="656.5" y1="5.0" x2="656.5" y2="51.5" stroke="#f0e6d8" stroke-width="1" stroke-dasharray="3 2"/>
<line x1="677.5" y1="5.0" x2="677.5" y2="51.5" stroke="#f0e6d8" stroke-width="1" stroke-dasharray="3 2"/>
<line x1="698.5" y1="5.0" x2="698.5" y2="51.5" stroke="#f0e6d8" stroke-width="1" stroke-dasharray="3 2"/>
<line x1="719.5" y1="5.0" x2="719.5" y2="51.5" stroke="#f0e6d8" stroke-width="1" stroke-dasharray="3 2"/>
<line x1="740.5" y1="5.0" x2="740.5" y2="51.5" stroke="#f0e6d8" stroke-width="1" stroke-dasharray="3 2"/>
<line x1="761.5" y1="5.0" x2="761.5" y2="51.5" stroke="#f0e6d8" stroke-width="1" stroke-dasharray="3 2"/>
<line x1="965.5" y1="5.0" x2="965.5" y2="51.5" stroke="#f0e6d8" stroke-width="1" stroke-dasharray="3 2"/>
<line x1="986.5" y1="5.0" x2="986.5" y2="51.5" stroke="#f0e6d8" stroke-width="1" stroke-dasharray="3 2"/>
<line x1="1007.5" y1="5.0" x2="1007.5" y2="51.5" stroke="#f0e6d8" stroke-width="1" stroke-dasharray="3 2"/>
<line x1="1028.5" y1="5.0" x2="1028.5" y2="51.5" stroke="#f0e6d8" stroke-width="1" stroke-dasharray="3 2"/>
<line x1="1049.5" y1="5.0" x2="1049.5" y2="51.5" stroke="#f0e6d8" stroke-width="1" stroke-dasharray="3 2"/>
<line x1="1070.5" y1="5.0" x2="1070.5" y2="51.5" stroke="#f0e6d8" stroke-width="1" stroke-dasharray="3 2"/>
<line x1="1091.5" y1="5.0" x2="1091.5" y2="51.5" stroke="#f0e6d8" stroke-width="1" stroke-dasharray="3 2"/>
<line x1="1112.5" y1="5.0" x2="1112.5" y2="51.5" stroke="#f0e6d8" stroke-width="1" stroke-dasharray="3 2"/>
<line x1="0.0" y1="5.5" x2="1134.0" y2="5.5" stroke="#f0e6d8" stroke-width="1" stroke-dasharray="3 2"/>
<line x1="0.0" y1="51.5" x2="1134.0" y2="51.5" stroke="#f0e6d8" stroke-width="1" stroke-dasharray="3 2"/>
<line x1="0.5" y1="5.0" x2="0.5" y2="51.5" stroke="#f0e6d8" stroke-width="1" stroke-dasharray="3 2"/>
<line x1="20.5" y1="51.5" x2="20.5" y2="98.3" stroke="#c6c6c6" stroke-width="1" stroke-dasharray="3 2"/>
<line x1="41.5" y1="51.5" x2="41.5" y2="98.3" stroke="#c6c6c6" stroke-width="1" stroke-dasharray="3 2"/>
<line x1="188.5" y1="51.5" x2="188.5" y2="98.3" stroke="#c6c6c6" stroke-width="1" stroke-dasharray="3 2"/>
<line x1="247.5" y1="51.5" x2="247.5" y2="98.3" stroke="#c6c6c6" stroke-width="1" stroke-dasharray="3 2"/>
<line x1="268.5" y1="51.5" x2="268.5" y2="98.3" stroke="#c6c6c6" stroke-width="1" stroke-dasharray="3 2"/>
<line x1="310.5" y1="51.5" x2="310.5" y2="98.3" stroke="#c6c6c6" stroke-width="1" stroke-dasharray="3 2"/>
<line x1="340.5" y1="51.5" x2="340.5" y2="98.3" stroke="#c6c6c6" stroke-width="1" stroke-dasharray="3 2"/>
<line x1="466.5" y1="51.5" x2="466.5" y2="98.3" stroke="#c6c6c6" stroke-width="1" stroke-dasharray="3 2"/>
<line x1="494.5" y1="51.5" x2="494.5" y2="98.3" stroke="#c6c6c6" stroke-width="1" stroke-dasharray="3 2"/>
<line x1="543.5" y1="51.5" x2="543.5" y2="98.3" stroke="#c6c6c6" stroke-width="1" stroke-dasharray="3 2"/>
<line x1="902.5" y1="51.5" x2="902.5" y2="98.3" stroke="#c6c6c6" stroke-width="1" stroke-dasharray="3 2"/>
<line x1="0.0" y1="98.5" x2="1134.0" y2="98.5" stroke="#c6c6c6" stroke-width="1" stroke-dasharray="3 2"/>
<line x1="0.5" y1="51.5" x2="0.5" y2="136.0" stroke="#c6c6c6" stroke-width="1" stroke-dasharray="3 2"/>
<line x1="1133.5" y1="51.5" x2="1133.5" y2="136.0" stroke="#c6c6c6" stroke-width="1" stroke-dasharray="3 2"/>
<line x1="0.0" y1="99.5" x2="167.0" y2="99.5" stroke="#f0e6d8" stroke-width="1" stroke-dasharray="3 2"/>
<line x1="166.5" y1="99.0" x2="166.5" y2="134.0" stroke="#f0e6d8" stroke-width="1" stroke-dasharray="3 2"/>
<line x1="0.5" y1="99.0" x2="0.5" y2="134.0" stroke="#f0e6d8" stroke-width="1" stroke-dasharray="3 2"/>
<line x1="188.5" y1="98.3" x2="188.5" y2="134.5" stroke="#c6c6c6" stroke-width="1" stroke-dasharray="3 2"/>
<line x1="247.5" y1="98.3" x2="247.5" y2="134.5" stroke="#c6c6c6" stroke-width="1" stroke-dasharray="3 2"/>
<line x1="268.5" y1="98.3" x2="268.5" y2="134.5" stroke="#c6c6c6" stroke-width="1" stroke-dasharray="3 2"/>
<line x1="310.5" y1="98.3" x2="310.5" y2="134.5" stroke="#c6c6c6" stroke-width="1" stroke-dasharray="3 2"/>
<line x1="340.5" y1="98.3" x2="340.5" y2="134.5" stroke="#c6c6c6" stroke-width="1" stroke-dasharray="3 2"/>
<line x1="361.5" y1="98.3" x2="361.5" y2="134.5" stroke="#c6c6c6" stroke-width="1" stroke-dasharray="3 2"/>
<line x1="382.5" y1="98.3" x2="382.5" y2="134.5" stroke="#c6c6c6" stroke-width="1" stroke-dasharray="3 2"/>
<line x1="403.5" y1="98.3" x2="403.5" y2="134.5" stroke="#c6c6c6" stroke-width="1" stroke-dasharray="3 2"/>
<line x1="424.5" y1="98.3" x2="424.5" y2="134.5" stroke="#c6c6c6" stroke-width="1" stroke-dasharray="3 2"/>
<line x1="445.5" y1="98.3" x2="445.5" y2="134.5" stroke="#c6c6c6" stroke-width="1" stroke-dasharray="3 2"/>
<line x1="466.5" y1="98.3" x2="466.5" y2="134.5" stroke="#c6c6c6" stroke-width="1" stroke-dasharray="3 2"/>
<line x1="494.5" y1="98.3" x2="494.5" y2="134.5" stroke="#c6c6c6" stroke-width="1" stroke-dasharray="3 2"/>
<line x1="543.5" y1="98.3" x2="543.5" y2="134.5" stroke="#c6c6c6" stroke-width="1" stroke-dasharray="3 2"/>
<line x1="902.5" y1="98.3" x2="902.5" y2="134.5" stroke="#c6c6c6" stroke-width="1" stroke-dasharray="3 2"/>
<line x1="105.5" y1="136.0" x2="105.5" y2="384.4" stroke="#c6c6c6" stroke-width="1" stroke-dasharray="3 2"/>
<line x1="0.0" y1="170.5" x2="105.0" y2="170.5" stroke="#c6c6c6" stroke-width="1" stroke-dasharray="3 2"/>
<line x1="105.0" y1="170.5" x2="1133.0" y2="170.5" stroke="#d81010" stroke-width="1" stroke-dasharray="3 2"/>
<line x1="0.0" y1="206.5" x2="105.0" y2="206.5" stroke="#c6c6c6" stroke-width="1" stroke-dasharray="3 2"/>
<line x1="105.0" y1="206.5" x2="1133.0" y2="206.5" stroke="#d81010" stroke-width="1" stroke-dasharray="3 2"/>
<line x1="0.0" y1="244.5" x2="105.0" y2="244.5" stroke="#c6c6c6" stroke-width="1" stroke-dasharray="3 2"/>
<line x1="105.0" y1="244.5" x2="877.5" y2="244.5" stroke="#d81010" stroke-width="1" stroke-dasharray="3 2"/>
<line x1="877.5" y1="244.5" x2="982.0" y2="244.5" stroke="#c6c6c6" stroke-width="1" stroke-dasharray="3 2"/>
<line x1="982.0" y1="244.5" x2="1133.0" y2="244.5" stroke="#d81010" stroke-width="1" stroke-dasharray="3 2"/>
<line x1="0.0" y1="308.5" x2="105.0" y2="308.5" stroke="#c6c6c6" stroke-width="1" stroke-dasharray="3 2"/>
<line x1="105.0" y1="308.5" x2="1133.0" y2="308.5" stroke="#d81010" stroke-width="1" stroke-dasharray="3 2"/>
<line x1="0.0" y1="346.5" x2="105.0" y2="346.5" stroke="#c6c6c6" stroke-width="1" stroke-dasharray="3 2"/>
<line x1="105.0" y1="346.5" x2="245.0" y2="346.5" stroke="#d81010" stroke-width="1" stroke-dasharray="3 2"/>
<line x1="245.0" y1="346.5" x2="282.0" y2="346.5" stroke="#c6c6c6" stroke-width="1" stroke-dasharray="3 2"/>
<line x1="282.0" y1="346.5" x2="428.5" y2="346.5" stroke="#d81010" stroke-width="1" stroke-dasharray="3 2"/>
<line x1="428.5" y1="346.5" x2="515.5" y2="346.5" stroke="#c6c6c6" stroke-width="1" stroke-dasharray="3 2"/>
<line x1="515.5" y1="346.5" x2="773.0" y2="346.5" stroke="#d81010" stroke-width="1" stroke-dasharray="3 2"/>
<line x1="773.0" y1="346.5" x2="878.0" y2="346.5" stroke="#c6c6c6" stroke-width="1" stroke-dasharray="3 2"/>
<line x1="878.0" y1="346.5" x2="1133.0" y2="346.5" stroke="#d81010" stroke-width="1" stroke-dasharray="3 2"/>
<line x1="0.0" y1="384.5" x2="105.0" y2="384.5" stroke="#c6c6c6" stroke-width="1" stroke-dasharray="3 2"/>
<line x1="105.0" y1="384.5" x2="773.0" y2="384.5" stroke="#d81010" stroke-width="1" stroke-dasharray="3 2"/>
<line x1="773.0" y1="384.5" x2="878.0" y2="384.5" stroke="#c6c6c6" stroke-width="1" stroke-dasharray="3 2"/>
<line x1="878.0" y1="384.5" x2="1133.0" y2="384.5" stroke="#d81010" stroke-width="1" stroke-dasharray="3 2"/>
<line x1="877.5" y1="206.8" x2="877.5" y2="244.3" stroke="#c6c6c6" stroke-width="1" stroke-dasharray="3 2"/>
<line x1="982.5" y1="206.8" x2="982.5" y2="244.3" stroke="#c6c6c6" stroke-width="1" stroke-dasharray="3 2"/>
<line x1="245.5" y1="308.4" x2="245.5" y2="346.6" stroke="#c6c6c6" stroke-width="1" stroke-dasharray="3 2"/>
<line x1="282.5" y1="308.4" x2="282.5" y2="346.6" stroke="#c6c6c6" stroke-width="1" stroke-dasharray="3 2"/>
<line x1="428.5" y1="308.4" x2="428.5" y2="346.6" stroke="#c6c6c6" stroke-width="1" stroke-dasharray="3 2"/>
<line x1="515.5" y1="308.4" x2="515.5" y2="346.6" stroke="#c6c6c6" stroke-width="1" stroke-dasharray="3 2"/>
<line x1="773.5" y1="308.4" x2="773.5" y2="346.6" stroke="#c6c6c6" stroke-width="1" stroke-dasharray="3 2"/>
<line x1="878.5" y1="308.4" x2="878.5" y2="346.6" stroke="#c6c6c6" stroke-width="1" stroke-dasharray="3 2"/>
<line x1="773.5" y1="346.6" x2="773.5" y2="384.4" stroke="#c6c6c6" stroke-width="1" stroke-dasharray="3 2"/>
<line x1="878.5" y1="346.6" x2="878.5" y2="384.4" stroke="#c6c6c6" stroke-width="1" stroke-dasharray="3 2"/>
<line x1="105.5" y1="384.4" x2="105.5" y2="394.5" stroke="#c6c6c6" stroke-width="1" stroke-dasharray="3 2"/>
<line x1="0.5" y1="395.5" x2="0.5" y2="416.0" stroke="#c6c6c6" stroke-width="1" stroke-dasharray="3 2"/>
<line x1="1133.5" y1="395.5" x2="1133.5" y2="416.0" stroke="#c6c6c6" stroke-width="1" stroke-dasharray="3 2"/>
<line x1="0.0" y1="415.5" x2="1133.0" y2="415.5" stroke="#c6c6c6" stroke-width="1" stroke-dasharray="3 2"/>
<line x1="0.0" y1="416.5" x2="170.0" y2="416.5" stroke="#f0e6d8" stroke-width="1" stroke-dasharray="3 2"/>
<line x1="169.5" y1="416.0" x2="169.5" y2="449.0" stroke="#f0e6d8" stroke-width="1" stroke-dasharray="3 2"/>
<line x1="0.5" y1="416.0" x2="0.5" y2="449.0" stroke="#f0e6d8" stroke-width="1" stroke-dasharray="3 2"/>
<line x1="208.5" y1="415.5" x2="208.5" y2="449.0" stroke="#c6c6c6" stroke-width="1" stroke-dasharray="3 2"/>
<line x1="245.5" y1="415.5" x2="245.5" y2="449.0" stroke="#c6c6c6" stroke-width="1" stroke-dasharray="3 2"/>
<line x1="281.5" y1="415.5" x2="281.5" y2="449.0" stroke="#c6c6c6" stroke-width="1" stroke-dasharray="3 2"/>
<line x1="318.5" y1="415.5" x2="318.5" y2="449.0" stroke="#c6c6c6" stroke-width="1" stroke-dasharray="3 2"/>
<line x1="355.5" y1="415.5" x2="355.5" y2="449.0" stroke="#c6c6c6" stroke-width="1" stroke-dasharray="3 2"/>
<line x1="392.5" y1="415.5" x2="392.5" y2="449.0" stroke="#c6c6c6" stroke-width="1" stroke-dasharray="3 2"/>
<line x1="428.5" y1="415.5" x2="428.5" y2="449.0" stroke="#c6c6c6" stroke-width="1" stroke-dasharray="3 2"/>
<line x1="465.5" y1="415.5" x2="465.5" y2="449.0" stroke="#c6c6c6" stroke-width="1" stroke-dasharray="3 2"/>
<line x1="515.5" y1="415.5" x2="515.5" y2="449.0" stroke="#c6c6c6" stroke-width="1" stroke-dasharray="3 2"/>
<line x1="552.5" y1="415.5" x2="552.5" y2="449.0" stroke="#c6c6c6" stroke-width="1" stroke-dasharray="3 2"/>
<line x1="589.5" y1="415.5" x2="589.5" y2="449.0" stroke="#c6c6c6" stroke-width="1" stroke-dasharray="3 2"/>
<line x1="626.5" y1="415.5" x2="626.5" y2="449.0" stroke="#c6c6c6" stroke-width="1" stroke-dasharray="3 2"/>
<line x1="662.5" y1="415.5" x2="662.5" y2="449.0" stroke="#c6c6c6" stroke-width="1" stroke-dasharray="3 2"/>
<line x1="694.5" y1="415.5" x2="694.5" y2="449.0" stroke="#c6c6c6" stroke-width="1" stroke-dasharray="3 2"/>
<line x1="731.5" y1="415.5" x2="731.5" y2="449.0" stroke="#c6c6c6" stroke-width="1" stroke-dasharray="3 2"/>
<line x1="772.5" y1="415.5" x2="772.5" y2="449.0" stroke="#c6c6c6" stroke-width="1" stroke-dasharray="3 2"/>
<line x1="807.5" y1="415.5" x2="807.5" y2="449.0" stroke="#c6c6c6" stroke-width="1" stroke-dasharray="3 2"/>
<line x1="842.5" y1="415.5" x2="842.5" y2="449.0" stroke="#c6c6c6" stroke-width="1" stroke-dasharray="3 2"/>
<line x1="877.5" y1="415.5" x2="877.5" y2="449.0" stroke="#c6c6c6" stroke-width="1" stroke-dasharray="3 2"/>
<line x1="912.5" y1="415.5" x2="912.5" y2="449.0" stroke="#c6c6c6" stroke-width="1" stroke-dasharray="3 2"/>
<line x1="946.5" y1="415.5" x2="946.5" y2="449.0" stroke="#c6c6c6" stroke-width="1" stroke-dasharray="3 2"/>
<line x1="982.5" y1="415.5" x2="982.5" y2="449.0" stroke="#c6c6c6" stroke-width="1" stroke-dasharray="3 2"/>
<line x1="1026.5" y1="415.5" x2="1026.5" y2="449.0" stroke="#c6c6c6" stroke-width="1" stroke-dasharray="3 2"/>
<line x1="1059.5" y1="415.5" x2="1059.5" y2="449.0" stroke="#c6c6c6" stroke-width="1" stroke-dasharray="3 2"/>
<line x1="1092.5" y1="415.5" x2="1092.5" y2="449.0" stroke="#c6c6c6" stroke-width="1" stroke-dasharray="3 2"/>
<line x1="105.5" y1="450.5" x2="105.5" y2="610.3" stroke="#c6c6c6" stroke-width="1" stroke-dasharray="3 2"/>
<line x1="0.0" y1="486.5" x2="105.0" y2="486.5" stroke="#c6c6c6" stroke-width="1" stroke-dasharray="3 2"/>
<line x1="105.0" y1="486.5" x2="428.5" y2="486.5" stroke="#d81010" stroke-width="1" stroke-dasharray="3 2"/>
<line x1="428.5" y1="486.5" x2="515.6" y2="486.5" stroke="#c6c6c6" stroke-width="1" stroke-dasharray="3 2"/>
<line x1="515.6" y1="486.5" x2="773.0" y2="486.5" stroke="#d81010" stroke-width="1" stroke-dasharray="3 2"/>
<line x1="773.0" y1="486.5" x2="878.0" y2="486.5" stroke="#c6c6c6" stroke-width="1" stroke-dasharray="3 2"/>
<line x1="878.0" y1="486.5" x2="1133.0" y2="486.5" stroke="#d81010" stroke-width="1" stroke-dasharray="3 2"/>
<line x1="0.0" y1="524.5" x2="105.0" y2="524.5" stroke="#c6c6c6" stroke-width="1" stroke-dasharray="3 2"/>
<line x1="105.0" y1="524.5" x2="773.0" y2="524.5" stroke="#d81010" stroke-width="1" stroke-dasharray="3 2"/>
<line x1="773.0" y1="524.5" x2="878.0" y2="524.5" stroke="#c6c6c6" stroke-width="1" stroke-dasharray="3 2"/>
<line x1="878.0" y1="524.5" x2="1133.0" y2="524.5" stroke="#d81010" stroke-width="1" stroke-dasharray="3 2"/>
<line x1="0.0" y1="562.5" x2="105.0" y2="562.5" stroke="#c6c6c6" stroke-width="1" stroke-dasharray="3 2"/>
<line x1="105.0" y1="562.5" x2="773.0" y2="562.5" stroke="#d81010" stroke-width="1" stroke-dasharray="3 2"/>
<line x1="773.0" y1="562.5" x2="878.0" y2="562.5" stroke="#c6c6c6" stroke-width="1" stroke-dasharray="3 2"/>
<line x1="878.0" y1="562.5" x2="1133.0" y2="562.5" stroke="#d81010" stroke-width="1" stroke-dasharray="3 2"/>
<line x1="0.0" y1="599.5" x2="1133.0" y2="599.5" stroke="#c6c6c6" stroke-width="1" stroke-dasharray="3 2"/>
<line x1="428.5" y1="450.5" x2="428.5" y2="486.5" stroke="#c6c6c6" stroke-width="1" stroke-dasharray="3 2"/>
<line x1="515.5" y1="450.5" x2="515.5" y2="486.5" stroke="#c6c6c6" stroke-width="1" stroke-dasharray="3 2"/>
<line x1="773.5" y1="450.5" x2="773.5" y2="562.4" stroke="#c6c6c6" stroke-width="1" stroke-dasharray="3 2"/>
<line x1="878.5" y1="450.5" x2="878.5" y2="562.4" stroke="#c6c6c6" stroke-width="1" stroke-dasharray="3 2"/>
<line x1="773.5" y1="562.4" x2="773.5" y2="632.0" stroke="#c6c6c6" stroke-width="1" stroke-dasharray="3 2"/>
<line x1="105.5" y1="610.3" x2="105.5" y2="632.0" stroke="#c6c6c6" stroke-width="1" stroke-dasharray="3 2"/>
<line x1="0.5" y1="611.0" x2="0.5" y2="632.0" stroke="#c6c6c6" stroke-width="1" stroke-dasharray="3 2"/>
<line x1="1133.5" y1="611.0" x2="1133.5" y2="632.0" stroke="#c6c6c6" stroke-width="1" stroke-dasharray="3 2"/>
<line x1="0.0" y1="632.5" x2="1133.0" y2="632.5" stroke="#c6c6c6" stroke-width="1" stroke-dasharray="3 2"/>
<line x1="0.0" y1="632.5" x2="167.5" y2="632.5" stroke="#f0e6d8" stroke-width="1" stroke-dasharray="3 2"/>
<line x1="167.5" y1="632.5" x2="167.5" y2="663.0" stroke="#f0e6d8" stroke-width="1" stroke-dasharray="3 2"/>
<line x1="0.5" y1="632.5" x2="0.5" y2="663.0" stroke="#f0e6d8" stroke-width="1" stroke-dasharray="3 2"/>
<line x1="206.5" y1="632.3" x2="206.5" y2="663.5" stroke="#c6c6c6" stroke-width="1" stroke-dasharray="3 2"/>
<line x1="245.5" y1="632.3" x2="245.5" y2="663.5" stroke="#c6c6c6" stroke-width="1" stroke-dasharray="3 2"/>
<line x1="283.5" y1="632.3" x2="283.5" y2="663.5" stroke="#c6c6c6" stroke-width="1" stroke-dasharray="3 2"/>
<line x1="321.5" y1="632.3" x2="321.5" y2="663.5" stroke="#c6c6c6" stroke-width="1" stroke-dasharray="3 2"/>
<line x1="358.5" y1="632.3" x2="358.5" y2="663.5" stroke="#c6c6c6" stroke-width="1" stroke-dasharray="3 2"/>
<line x1="395.5" y1="632.3" x2="395.5" y2="663.5" stroke="#c6c6c6" stroke-width="1" stroke-dasharray="3 2"/>
<line x1="431.5" y1="632.3" x2="431.5" y2="663.5" stroke="#c6c6c6" stroke-width="1" stroke-dasharray="3 2"/>
<line x1="468.5" y1="632.3" x2="468.5" y2="663.5" stroke="#c6c6c6" stroke-width="1" stroke-dasharray="3 2"/>
<line x1="505.5" y1="632.3" x2="505.5" y2="663.5" stroke="#c6c6c6" stroke-width="1" stroke-dasharray="3 2"/>
<line x1="541.5" y1="632.3" x2="541.5" y2="663.5" stroke="#c6c6c6" stroke-width="1" stroke-dasharray="3 2"/>
<line x1="576.5" y1="632.3" x2="576.5" y2="663.5" stroke="#c6c6c6" stroke-width="1" stroke-dasharray="3 2"/>
<line x1="612.5" y1="632.3" x2="612.5" y2="663.5" stroke="#c6c6c6" stroke-width="1" stroke-dasharray="3 2"/>
<line x1="648.5" y1="632.3" x2="648.5" y2="663.5" stroke="#c6c6c6" stroke-width="1" stroke-dasharray="3 2"/>
<line x1="684.5" y1="632.3" x2="684.5" y2="663.5" stroke="#c6c6c6" stroke-width="1" stroke-dasharray="3 2"/>
<line x1="719.5" y1="632.3" x2="719.5" y2="663.5" stroke="#c6c6c6" stroke-width="1" stroke-dasharray="3 2"/>
<line x1="755.5" y1="632.3" x2="755.5" y2="663.5" stroke="#c6c6c6" stroke-width="1" stroke-dasharray="3 2"/>
<line x1="790.5" y1="632.3" x2="790.5" y2="663.5" stroke="#c6c6c6" stroke-width="1" stroke-dasharray="3 2"/>
<line x1="826.5" y1="632.3" x2="826.5" y2="663.5" stroke="#c6c6c6" stroke-width="1" stroke-dasharray="3 2"/>
<line x1="861.5" y1="632.3" x2="861.5" y2="663.5" stroke="#c6c6c6" stroke-width="1" stroke-dasharray="3 2"/>
<line x1="896.5" y1="632.3" x2="896.5" y2="663.5" stroke="#c6c6c6" stroke-width="1" stroke-dasharray="3 2"/>
<line x1="931.5" y1="632.3" x2="931.5" y2="663.5" stroke="#c6c6c6" stroke-width="1" stroke-dasharray="3 2"/>
<line x1="965.5" y1="632.3" x2="965.5" y2="663.5" stroke="#c6c6c6" stroke-width="1" stroke-dasharray="3 2"/>
<line x1="998.5" y1="632.3" x2="998.5" y2="663.5" stroke="#c6c6c6" stroke-width="1" stroke-dasharray="3 2"/>
<line x1="1032.5" y1="632.3" x2="1032.5" y2="663.5" stroke="#c6c6c6" stroke-width="1" stroke-dasharray="3 2"/>
<line x1="1065.5" y1="632.3" x2="1065.5" y2="663.5" stroke="#c6c6c6" stroke-width="1" stroke-dasharray="3 2"/>
<line x1="1099.5" y1="632.3" x2="1099.5" y2="663.5" stroke="#c6c6c6" stroke-width="1" stroke-dasharray="3 2"/>
<line x1="106.5" y1="665.0" x2="106.5" y2="710.5" stroke="#c6c6c6" stroke-width="1" stroke-dasharray="3 2"/>
<line x1="0.0" y1="699.5" x2="106.0" y2="699.5" stroke="#c6c6c6" stroke-width="1" stroke-dasharray="3 2"/>
<line x1="106.0" y1="699.5" x2="1133.0" y2="699.5" stroke="#d81010" stroke-width="1" stroke-dasharray="3 2"/>
<line x1="1032.5" y1="699.3" x2="1032.5" y2="710.5" stroke="#c6c6c6" stroke-width="1" stroke-dasharray="3 2"/>
<line x1="1065.5" y1="699.3" x2="1065.5" y2="710.5" stroke="#c6c6c6" stroke-width="1" stroke-dasharray="3 2"/>
<line x1="1099.5" y1="699.3" x2="1099.5" y2="710.5" stroke="#c6c6c6" stroke-width="1" stroke-dasharray="3 2"/>
<line x1="0.0" y1="711.5" x2="1133.0" y2="711.5" stroke="#c6c6c6" stroke-width="1" stroke-dasharray="3 2"/>
<line x1="0.5" y1="711.5" x2="0.5" y2="745.5" stroke="#c6c6c6" stroke-width="1" stroke-dasharray="3 2"/>
<line x1="1133.5" y1="711.5" x2="1133.5" y2="745.5" stroke="#c6c6c6" stroke-width="1" stroke-dasharray="3 2"/>
<line x1="0.0" y1="745.5" x2="1133.0" y2="745.5" stroke="#c6c6c6" stroke-width="1" stroke-dasharray="3 2"/>
</svg>
<div class="a" style="left:1104px;top:0;width:30px;height:29.5px;z-index:3;background:conic-gradient(from 315deg at 50% 50%, #3a9ef0 0deg, #5ad8e8 40deg, #62e0d0 55deg, #4cae48 95deg, #9ee040 125deg, #f4e838 160deg, #f8e430 180deg, #3a8be9 181deg);clip-path:polygon(0 0,100% 0,100% 100%)"></div>
</div>
<!--/FORM-->
<div id="btm" class="a">
<div class="a" style="left:0;top:0;width:20px;height:20px;background:#585858"></div>
<svg class="a" style="left:6px;top:5px" width="8" height="12" viewBox="0 0 8 12"><path d="M6.5 1L1.5 6l5 5" fill="none" stroke="#6e6e6e" stroke-width="1"/></svg>
<div class="a bt" style="left:20.0px;width:117.0px;background:#676767">
<span style="display:block;text-align:center;width:100%">其他督办</span>
</div>
<div class="a bt" style="left:137.0px;width:140.4px;background:#4f4f4f">
<span style="display:block;text-align:center;width:100%">年度重点工作</span>
</div>
<div class="a" style="left:136.5px;top:0;width:1px;height:20px;background:#5e5e5e"></div>
<div class="a bt" style="left:277.4px;width:114.6px;background:#4f4f4f">
<span style="display:block;text-align:center;width:100%">重要文件</span>
</div>
<div class="a" style="left:276.9px;top:0;width:1px;height:20px;background:#5e5e5e"></div>
<div class="a bt" style="left:392.0px;width:115.3px;background:#4f4f4f">
<span style="display:block;text-align:center;width:100%">会议议定</span>
</div>
<div class="a" style="left:391.5px;top:0;width:1px;height:20px;background:#5e5e5e"></div>
<div class="a bt" style="left:507.3px;width:115.4px;background:#4f4f4f">
<span style="display:block;text-align:center;width:100%">领导交办</span>
</div>
<div class="a" style="left:506.8px;top:0;width:1px;height:20px;background:#5e5e5e"></div>
<div class="a bt" style="left:622.7px;width:115.3px;background:#4f4f4f">
<span style="display:block;text-align:center;width:100%">按钮权限</span>
</div>
<div class="a" style="left:622.2px;top:0;width:1px;height:20px;background:#5e5e5e"></div>
<div class="a bt" style="left:738.0px;width:116.0px;background:#4f4f4f">
<span style="display:block;text-align:center;width:100%">反馈记录</span>
</div>
<div class="a" style="left:737.5px;top:0;width:1px;height:20px;background:#5e5e5e"></div>
<div class="a bt" style="left:854.0px;width:115.0px;background:#4f4f4f">
<span style="display:block;text-align:center;width:100%">催办记录</span>
</div>
<div class="a" style="left:853.5px;top:0;width:1px;height:20px;background:#5e5e5e"></div>
<div class="a bt" style="left:969.0px;width:116.0px;background:#4f4f4f">
<span style="display:block;text-align:center;width:100%">变更记录</span>
</div>
<div class="a" style="left:968.5px;top:0;width:1px;height:20px;background:#5e5e5e"></div>
<div class="a bt" style="left:1085.0px;width:115.0px;background:#4f4f4f">
<span style="display:block;text-align:center;width:100%">领导批示</span>
</div>
<div class="a" style="left:1084.5px;top:0;width:1px;height:20px;background:#5e5e5e"></div>
<div class="a bt" style="left:1200.0px;width:116.5px;background:#4f4f4f">
<span style="display:block;text-align:center;width:100%">领导关注</span>
</div>
<div class="a" style="left:1199.5px;top:0;width:1px;height:20px;background:#5e5e5e"></div>
<div class="a bt" style="left:1316.5px;width:80.8px;background:#4f4f4f">
<span class="a" style="left:31px;top:0">办结考评</span>
</div>
<div class="a" style="left:1316.0px;top:0;width:1px;height:20px;background:#5e5e5e"></div>
<div class="a" style="left:1396.8px;top:0;width:1px;height:20px;background:#5e5e5e"></div>
<div class="a" style="left:1416.5px;top:0;width:1px;height:20px;background:#5e5e5e"></div>
<svg class="a" style="left:1402px;top:4px" width="12" height="12" viewBox="0 0 12 12"><path d="M6 0.5v11M0.5 6h11" stroke="#f0f0f0" stroke-width="1.4"/></svg>
<svg class="a" style="left:1425px;top:4px" width="9" height="12" viewBox="0 0 9 12"><path d="M1.5 0.8L7.5 6l-6 5.2" fill="none" stroke="#f0f0f0" stroke-width="1.2"/></svg>
</div>
<div id="ann" class="a" style="left:13px;top:697px;width:221px;height:70px;border:7px solid #fc3535;z-index:20"></div>
<svg class="a" style="left:0;top:0;z-index:21" width="1656" height="964" viewBox="0 0 1656 964"><g fill="#fc3535">
<path d="M216 121L234.5 124.5 230.5 128.2 337.5 208.8 226.8 133 224.5 136.3z"/>
<path d="M254 694.5L266.8 681.5 268.6 685.8 435.7 621 272.2 691.8 272.8 696.3z"/>
</g></svg>
</body></html>
